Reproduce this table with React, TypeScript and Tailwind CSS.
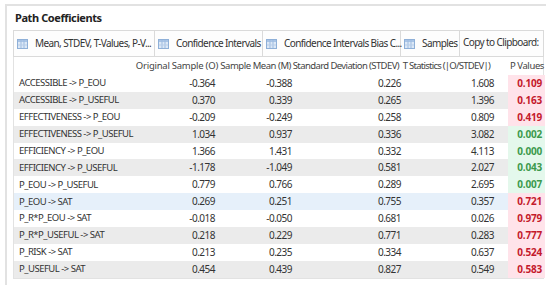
import type { FC } from 'react';

type Row = [string, string, string, string, string, string];

const ROWS: Row[] = [
  ['ACCESSIBLE -> P_EOU', '-0.364', '-0.388', '0.226', '1.608', '0.109'],
  ['ACCESSIBLE -> P_USEFUL', '0.370', '0.339', '0.265', '1.396', '0.163'],
  ['EFFECTIVENESS -> P_EOU', '-0.209', '-0.249', '0.258', '0.809', '0.419'],
  ['EFFECTIVENESS -> P_USEFUL', '1.034', '0.937', '0.336', '3.082', '0.002'],
  ['EFFICIENCY -> P_EOU', '1.366', '1.431', '0.332', '4.113', '0.000'],
  ['EFFICIENCY -> P_USEFUL', '-1.178', '-1.049', '0.581', '2.027', '0.043'],
  ['P_EOU -> P_USEFUL', '0.779', '0.766', '0.289', '2.695', '0.007'],
  ['P_EOU -> SAT', '0.269', '0.251', '0.755', '0.357', '0.721'],
  ['P_R*P_EOU -> SAT', '-0.018', '-0.050', '0.681', '0.026', '0.979'],
  ['P_R*P_USEFUL -> SAT', '0.218', '0.229', '0.771', '0.283', '0.777'],
  ['P_RISK -> SAT', '0.213', '0.235', '0.334', '0.637', '0.524'],
  ['P_USEFUL -> SAT', '0.454', '0.439', '0.827', '0.549', '0.583'],
];

const GRAY_ROWS = [1, 3, 5, 9, 11];
const SELECTED_ROW = 7;

const TABS = [
  { label: 'Mean, STDEV, T-Values, P-V...', width: 'w-[141px]' },
  { label: 'Confidence Intervals', width: 'w-[108px]' },
  { label: 'Confidence Intervals Bias C...', width: 'w-[138px]' },
  { label: 'Samples', width: 'w-[59px]' },
];

const GRID = 'grid grid-cols-[124px_82px_75px_108px_95px_47px]';

const TableIcon: FC = () => (
  <svg width="11" height="10" viewBox="0 0 11 10" className="shrink-0">
    <rect x="0.5" y="0.5" width="10" height="9" fill="#dce8f6" stroke="#8fb0d8" />
    <rect x="1" y="1" width="9" height="2" fill="#a9c4e6" />
    <line x1="4" y1="1" x2="4" y2="9" stroke="#9dbbe0" />
    <line x1="7" y1="1" x2="7" y2="9" stroke="#9dbbe0" />
    <line x1="1" y1="6" x2="10" y2="6" stroke="#b7cde9" />
  </svg>
);

// header cell: right-aligned, overflows to the left like the original grid
const Head: FC<{ text: string; className: string }> = ({ text, className }) => (
  <div className={`flex justify-end whitespace-nowrap ${className}`}>{text}</div>
);

const App: FC = () => {
  return (
    <div className="w-[550px] h-[285px] bg-white pt-[4px] pl-[5px] overflow-hidden font-['Noto_Sans','Open_Sans',sans-serif] text-[#333]">
      <div className="w-[541px] h-full border-l-2 border-t-2 border-[#e2e2e2] pl-[6px]">
        <div className="h-[24px] flex items-center pl-[2px] text-[11px] font-bold tracking-[-0.4px] text-[#222]">
          Path Coefficients
        </div>

        <div className="w-[531px] h-[27px] flex border border-[#dadada] bg-[#fdfdfd] text-[10px] tracking-[-0.6px]">
          {TABS.map(({ label, width }) => (
            <div
              key={label}
              className={`${width} h-full flex items-center gap-[7px] pl-[3px] border-r border-[#dadada]`}
            >
              <TableIcon />
              <span className="whitespace-nowrap">{label}</span>
            </div>
          ))}
          <div className="flex-1 h-full flex items-center pl-[3px] pb-[2px] whitespace-nowrap">
            Copy to Clipboard:
          </div>
        </div>

        <div className="w-[531px] border-x border-b border-[#e2e2e2]">
          <div className={`${GRID} h-[18px] items-center text-[9.5px] text-[#444]`}>
            <div />
            <Head text="Original Sample (O)" className="pr-[2px] tracking-[-0.25px]" />
            <Head text="Sample Mean (M)" className="pr-[4px] tracking-[-0.45px]" />
            <Head text="Standard Deviation (STDEV)" className="pr-[4px] tracking-[-0.6px]" />
            <Head text="T Statistics (|O/STDEV|)" className="pr-[8px] tracking-[-0.75px]" />
            <Head text="P Values" className="pr-[1px] tracking-[-0.4px]" />
          </div>

          {ROWS.map((row, i) => {
            const bg =
              i === SELECTED_ROW
                ? 'bg-[#e6f0fa]'
                : GRAY_ROWS.includes(i)
                  ? 'bg-[#ebebeb]'
                  : 'bg-white';
            const significant = parseFloat(row[5]) < 0.05;
            return (
              <div
                key={row[0]}
                className={`${GRID} h-[16.9px] items-center ${bg} whitespace-nowrap text-[10px] tracking-[-0.5px]`}
              >
                <div className="pl-[5px] text-[9.5px] tracking-[-0.5px]">{row[0]}</div>
                <div className="text-right pr-[5px]">{row[1]}</div>
                <div className="text-right pr-[3px]">{row[2]}</div>
                <div className="text-right pr-[2px]">{row[3]}</div>
                <div className="text-right pr-[4px]">{row[4]}</div>
                <div className="h-full flex justify-end">
                  <div
                    className={`w-[37px] h-full flex items-center justify-end pr-[3px] font-bold tracking-[-0.2px] ${
                      significant ? 'bg-[#e4f8ec] text-[#3c9a4c]' : 'bg-[#ffe3ea] text-[#c41a2c]'
                    }`}
                  >
                    {row[5]}
                  </div>
                </div>
              </div>
            );
          })}
        </div>
      </div>
    </div>
  );
};

export default App;
